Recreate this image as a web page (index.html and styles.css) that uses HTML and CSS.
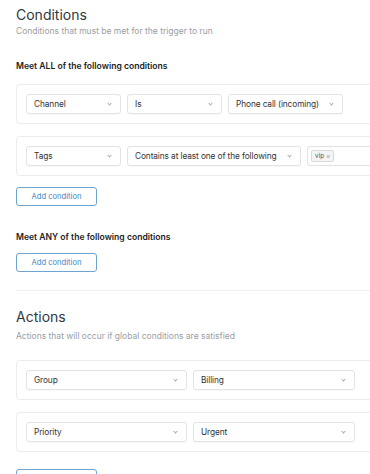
FILE: index.html
```html
<!DOCTYPE html>
<html lang="en">
  <head>
    <meta charset="UTF-8" />
    <meta name="viewport" content="width=device-width, initial-scale=1" />
    <title>Trigger conditions</title>
    <link rel="stylesheet" href="styles.css">
  </head>
  <body>
    <main class="page">
      <section class="block">
        <h2 class="block-title">Conditions</h2>
        <p class="block-sub">Conditions that must be met for the trigger to run</p>

        <h3 class="group-title">Meet ALL of the following conditions</h3>

        <div class="rule">
          <div class="select w-95">Channel<span class="chev"></span></div>
          <div class="select w-95">Is<span class="chev"></span></div>
          <div class="select w-115">Phone call (incoming)<span class="chev"></span></div>
        </div>

        <div class="rule">
          <div class="select w-95">Tags<span class="chev"></span></div>
          <div class="select w-174">Contains at least one of the following<span class="chev"></span></div>
          <div class="tag-input"><span class="tag">vip <span class="x">×</span></span></div>
        </div>

        <button class="btn" type="button">Add condition</button>

        <h3 class="group-title any">Meet ANY of the following conditions</h3>

        <button class="btn" type="button">Add condition</button>
      </section>

      <hr class="divider" />

      <section class="block">
        <h2 class="block-title">Actions</h2>
        <p class="block-sub actions-sub">Actions that will occur if global conditions are satisfied</p>

        <div class="rule actions">
          <div class="select w-161">Group<span class="chev"></span></div>
          <div class="select w-162">Billing<span class="chev"></span></div>
        </div>

        <div class="rule">
          <div class="select w-161">Priority<span class="chev"></span></div>
          <div class="select w-162">Urgent<span class="chev"></span></div>
        </div>

        <button class="btn last" type="button">Add action</button>
      </section>
    </main>
  </body>
</html>
```

FILE: styles.css
```css
:root {
  --clr-text: #2f3941;
  --clr-muted: #9a9ea2;
  --clr-border: #ececec;
  --clr-field: #e1e3e5;
  --clr-blue: #3d86c6;
  --font-family: Inter, "Noto Sans", "Liberation Sans", sans-serif;
}

* {
  box-sizing: border-box;
}

body {
  margin: 0;
  background: #fff;
  font-family: var(--font-family);
  color: var(--clr-text);
  overflow: hidden;
}

.page {
  width: 400px;
  padding: 6px 0 0 16px;
}

.block-title {
  margin: 0;
  font-size: 14px;
  line-height: 18px;
  font-weight: 400;
  color: var(--clr-text);
}

.block-sub {
  margin: 1px 0 0;
  font-size: 8.5px;
  line-height: 12px;
  color: var(--clr-muted);
}

.actions-sub {
  margin-top: 4px;
}

.group-title {
  margin: 23px 0 12px;
  font-size: 8.6px;
  line-height: 12px;
  font-weight: 600;
  color: #222;
}

.group-title.any {
  margin: 25px 0 11px;
}

/* Condition / action row card */
.rule {
  display: flex;
  gap: 6px;
  width: 380px;
  padding: 9px;
  border: 1px solid var(--clr-border);
  border-radius: 4px;
  margin-bottom: 12px;
}

.rule.actions {
  margin-top: 18px;
}

.select {
  position: relative;
  flex: none;
  height: 20px;
  padding: 0 0 0 7px;
  border: 1px solid var(--clr-field);
  border-radius: 3px;
  font-size: 8.3px;
  line-height: 18px;
  letter-spacing: -0.1px;
  color: #333;
  white-space: nowrap;
  box-shadow: 0 1px 1px rgb(0 0 0 / 0.03);
}

.chev {
  position: absolute;
  right: 9px;
  top: 7px;
  width: 3px;
  height: 3px;
  border-right: 1px solid #a8acb0;
  border-bottom: 1px solid #a8acb0;
  transform: rotate(45deg);
}

.w-95 { width: 95px; }
.w-115 { width: 115px; }
.w-174 { width: 174px; }
.w-161 { width: 161px; }
.w-162 { width: 162px; }

.tag-input {
  display: flex;
  align-items: center;
  flex: 1;
  height: 20px;
  border: 1px solid var(--clr-field);
  border-radius: 3px;
  padding: 0 3px;
}

.tag {
  display: inline-block;
  height: 12px;
  padding: 0 3px;
  border: 1px solid #d8dadc;
  border-radius: 2px;
  background: #f3f4f5;
  font-size: 6.5px;
  line-height: 10px;
  color: #555;
}

.tag .x {
  color: #999;
}

.btn {
  display: block;
  width: 81px;
  height: 19px;
  margin-top: -1px;
  padding: 0;
  border: 1px solid #6fa3d2;
  border-radius: 3px;
  background: #fff;
  font-family: var(--font-family);
  font-size: 7.6px;
  color: var(--clr-blue);
  cursor: pointer;
}

.btn.last {
  margin-top: 17px;
}

.divider {
  width: 380px;
  margin: 18px 0 17px;
  border: 0;
  border-top: 1px solid #efefef;
}
```
